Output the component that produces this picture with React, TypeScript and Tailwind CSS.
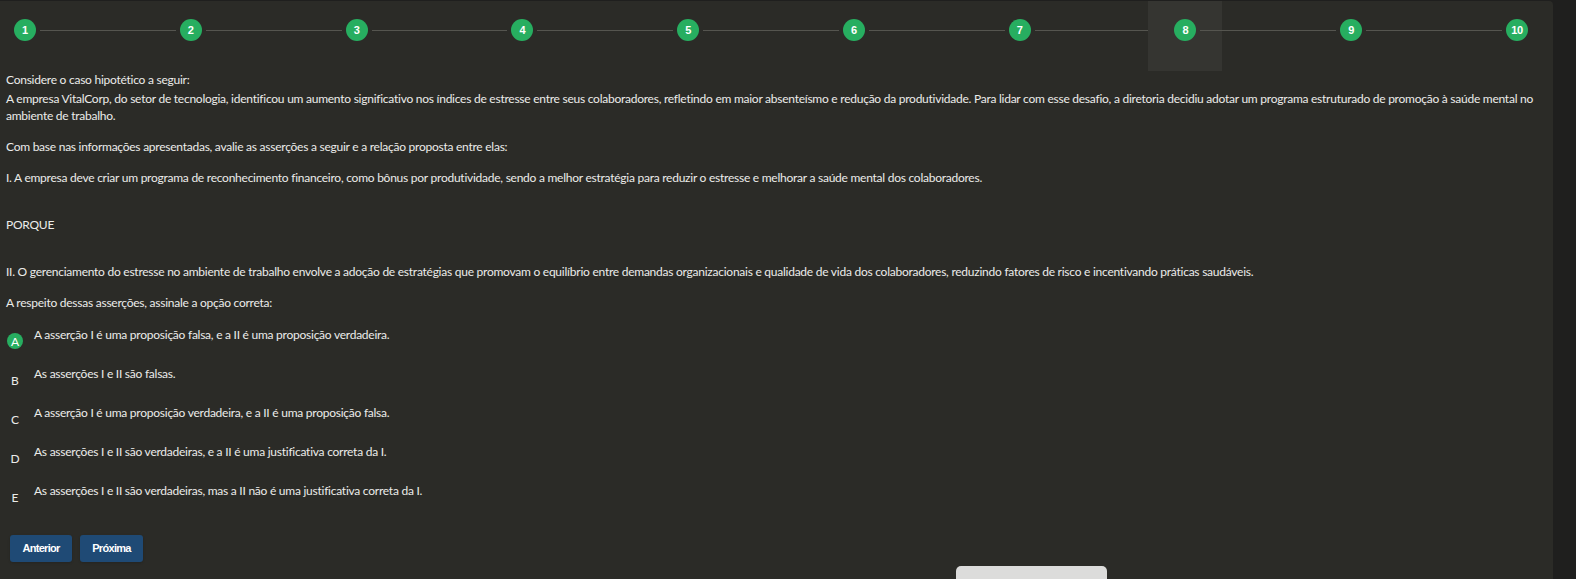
import React from "react";

const steps = [1, 2, 3, 4, 5, 6, 7, 8, 9, 10];
const current = 8;

const options = [
  { letter: "A", text: "A asserção I é uma proposição falsa, e a II é uma proposição verdadeira.", selected: true },
  { letter: "B", text: "As asserções I e II são falsas." },
  { letter: "C", text: "A asserção I é uma proposição verdadeira, e a II é uma proposição falsa." },
  { letter: "D", text: "As asserções I e II são verdadeiras, e a II é uma justificativa correta da I." },
  { letter: "E", text: "As asserções I e II são verdadeiras, mas a II não é uma justificativa correta da I." },
];

const Stepper: React.FC = () => (
  <div className="flex items-start h-[70px] pt-[18px] pl-[14px] pr-[25px]">
    {steps.map((n, i) => (
      <React.Fragment key={n}>
        <div className="relative flex justify-center">
          {n === current && (
            <div className="absolute top-[-18px] w-[74px] h-[70px] bg-[#353531]" />
          )}
          <div className="relative w-[22px] h-[22px] rounded-full bg-[#27ae60] text-white text-[11px] font-bold flex items-center justify-center font-['Liberation_Sans',sans-serif]">
            {n}
          </div>
        </div>
        {i < steps.length - 1 && (
          <div className="relative flex-1 h-px mt-[11px] bg-[#55554f] mx-[4px]" />
        )}
      </React.Fragment>
    ))}
  </div>
);

const App: React.FC = () => {
  return (
    <div className="relative h-[579px] overflow-hidden bg-[#1f1f1e] pt-px">
      <div className="w-[1553px] h-full rounded-tr-[4px] bg-[#2b2b27] text-[#ececea] font-['Lato',sans-serif] text-[12px] leading-[17px] tracking-[-0.25px]">
        <Stepper />
        <div className="px-[6px]">
          <p className="mb-[2px]">Considere o caso hipotético a seguir:</p>
          <p className="mb-[14px]">
            A empresa VitalCorp, do setor de tecnologia, identificou um aumento significativo nos índices de estresse entre seus colaboradores, refletindo em maior absenteísmo e redução da produtividade. Para lidar com esse desafio, a diretoria decidiu adotar um programa estruturado de promoção à saúde mental no ambiente de trabalho.
          </p>
          <p className="mb-[14px]">Com base nas informações apresentadas, avalie as asserções a seguir e a relação proposta entre elas:</p>
          <p className="mb-[30px]">
            I. A empresa deve criar um programa de reconhecimento financeiro, como bônus por produtividade, sendo a melhor estratégia para reduzir o estresse e melhorar a saúde mental dos colaboradores.
          </p>
          <p className="mb-[30px]">PORQUE</p>
          <p className="mb-[14px]">
            II. O gerenciamento do estresse no ambiente de trabalho envolve a adoção de estratégias que promovam o equilíbrio entre demandas organizacionais e qualidade de vida dos colaboradores, reduzindo fatores de risco e incentivando práticas saudáveis.
          </p>
          <p className="mb-[15px]">A respeito dessas asserções, assinale a opção correta:</p>

          <div className="flex flex-col">
            {options.map((o) => (
              <div key={o.letter} className="flex items-start h-[39px]">
                <span
                  className={`mt-[7px] w-[16px] h-[16px] ml-px mr-[11px] rounded-full flex items-center justify-center text-[12px] tracking-normal ${
                    o.selected ? "bg-[#27ae60] text-white" : "text-[#ececea]"
                  }`}
                >
                  {o.letter}
                </span>
                <span>{o.text}</span>
              </div>
            ))}
          </div>

          <div className="flex gap-[8px] mt-[14px] ml-[4px] font-['Liberation_Sans',sans-serif]">
            <button className="h-[27px] w-[62px] rounded-[3px] bg-[#1f4a75] text-white text-[11px] tracking-[-0.7px] font-bold shadow-sm">
              Anterior
            </button>
            <button className="h-[27px] w-[63px] rounded-[3px] bg-[#1f4a75] text-white text-[11px] tracking-[-0.7px] font-bold shadow-sm">
              Próxima
            </button>
          </div>
        </div>
      </div>
      <div className="absolute left-[956px] top-[566px] w-[151px] h-[20px] rounded-t-[5px] bg-[#dcdcdb]" />
    </div>
  );
};

export default App;
